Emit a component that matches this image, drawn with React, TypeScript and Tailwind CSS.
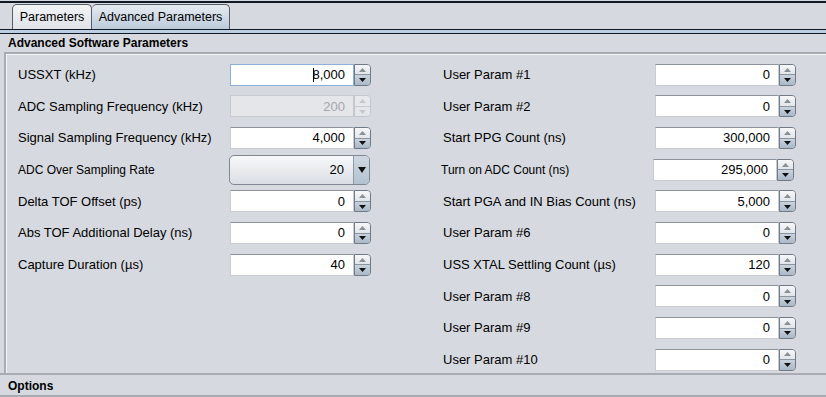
import React from 'react';

type Field = {
  label: string;
  value: string;
  small?: boolean;
  disabled?: boolean;
  focused?: boolean;
  combo?: boolean;
  nudge?: boolean;
};

const leftFields: Field[] = [
  { label: 'USSXT (kHz)', value: '8,000', focused: true },
  { label: 'ADC Sampling Frequency (kHz)', value: '200', disabled: true },
  { label: 'Signal Sampling Frequency (kHz)', value: '4,000' },
  { label: 'ADC Over Sampling Rate', value: '20', small: true, combo: true },
  { label: 'Delta TOF Offset (ps)', value: '0' },
  { label: 'Abs TOF Additional Delay (ns)', value: '0' },
  { label: 'Capture Duration (µs)', value: '40' },
];

const rightFields: Field[] = [
  { label: 'User Param #1', value: '0' },
  { label: 'User Param #2', value: '0' },
  { label: 'Start PPG Count (ns)', value: '300,000' },
  { label: 'Turn on ADC Count (ns)', value: '295,000', small: true, nudge: true },
  { label: 'Start PGA and IN Bias Count (ns)', value: '5,000' },
  { label: 'User Param #6', value: '0' },
  { label: 'USS XTAL Settling Count (µs)', value: '120' },
  { label: 'User Param #8', value: '0' },
  { label: 'User Param #9', value: '0' },
  { label: 'User Param #10', value: '0' },
];

const Spinner: React.FC<{ disabled?: boolean }> = ({ disabled }) => (
  <div
    className={`flex flex-col w-[17px] h-[22px] rounded-r-[4px] border overflow-hidden ${
      disabled ? 'border-[#c3c7cd]' : 'border-[#6f7a86]'
    }`}
  >
    <div
      className={`flex-1 flex items-center justify-center border-b ${
        disabled
          ? 'bg-[#e6e8ec] border-[#c8ccd2]'
          : 'bg-gradient-to-b from-[#f6f7f9] to-[#e1e5ea] border-[#8c96a1]'
      }`}
    >
      <svg width="7" height="4" viewBox="0 0 7 4">
        <polygon points="3.5,0 7,4 0,4" fill={disabled ? '#c4c8ce' : '#8a9098'} />
      </svg>
    </div>
    <div
      className={`flex-1 flex items-center justify-center ${
        disabled ? 'bg-[#e3e6ea]' : 'bg-gradient-to-b from-[#c9d3de] to-[#aab8c7]'
      }`}
    >
      <svg width="7" height="4" viewBox="0 0 7 4">
        <polygon points="0,0 7,0 3.5,4" fill={disabled ? '#c4c8ce' : '#111111'} />
      </svg>
    </div>
  </div>
);

const NumberInput: React.FC<{ field: Field }> = ({ field }) => {
  if (field.combo) {
    return (
      <div className="flex h-[30px] w-[141px] -ml-px rounded-[5px] border border-[#7f8893] bg-gradient-to-b from-[#f7f8fa] via-[#e9ebef] to-[#dadee4] overflow-hidden">
        <div className="flex-1 flex items-center justify-end pr-[9px] text-[13px] text-black">
          {field.value}
        </div>
        <div className="w-[16px] flex items-center justify-center border-l border-[#8e99a5] bg-gradient-to-b from-[#cfd8e2] to-[#b3c1cf]">
          <svg width="8" height="6" viewBox="0 0 8 6">
            <polygon points="0,0 8,0 4,6" fill="#111111" />
          </svg>
        </div>
      </div>
    );
  }
  return (
    <div className={`flex items-center ${field.nudge ? '-ml-[2px]' : ''}`}>
      <div
        className={`flex items-center justify-end h-[22px] w-[124px] pr-[8px] text-[13px] border ${
          field.disabled
            ? 'bg-[#e4e6ea] text-[#a3a6ab] border-[#c6cad0]'
            : field.focused
            ? 'bg-white text-black border-[#8eb0d8]'
            : 'bg-white text-black border-[#c9cdd3] border-t-[#8d939b]'
        }`}
      >
        {field.focused && <span className="inline-block w-px h-[14px] bg-black -mr-[2px]" />}
        {field.value}
      </div>
      <Spinner disabled={field.disabled} />
    </div>
  );
};

const Row: React.FC<{ field: Field }> = ({ field }) => (
  <div className="flex items-center h-[31.67px]">
    <div
      className={`w-[212px] text-black ${field.small ? 'text-[12px]' : 'text-[13px]'} ${
        field.nudge ? '-ml-[2px] mr-[2px]' : ''
      }`}
    >
      {field.label}
    </div>
    <NumberInput field={field} />
  </div>
);

export default function App() {
  return (
    <div
      className="w-[826px] h-[397px] overflow-hidden bg-[#d6d9df] flex flex-col"
      style={{ fontFamily: '"Liberation Sans", Arial, sans-serif' }}
    >
      {/* tab strip */}
      <div className="relative h-[34px] flex flex-col">
        <div className="h-[1px]" />
        <div className="h-[2px] bg-[#111a24]" />
        <div className="flex items-end h-[26px] pl-[12px]">
          <div className="h-[25px] w-[80px] flex items-center justify-center text-[12.5px] text-black rounded-t-[5px] border border-b-0 border-[#555d66] bg-gradient-to-b from-[#f2f3f5] to-[#dfe2e7]">
            Parameters
          </div>
          <div className="h-[25px] w-[138px] flex items-center justify-center text-[12.5px] text-black rounded-t-[5px] border border-b-0 border-l-0 border-[#555d66] bg-gradient-to-b from-[#e6ebf1] to-[#bccbda]">
            Advanced Parameters
          </div>
        </div>
        <div className="h-[1px] bg-[#111a24]" />
        <div className="h-[3px] bg-[#bccfe2]" />
        <div className="h-[1px] bg-[#111a24]" />
      </div>

      <div className="h-[18px] flex items-center pl-[8px] text-[12px] font-bold text-black">
        Advanced Software Parameters
      </div>

      <div className="ml-[4px] h-[321px] border-t-2 border-l-2 border-t-[#a9adb3] border-l-[#a9adb3] shadow-[inset_1px_1px_0_#f4f5f7] pt-[5px] pl-[12px] grid grid-cols-[425px_1fr]">
        <div className="flex flex-col">
          {leftFields.map((f) => (
            <Row key={f.label} field={f} />
          ))}
        </div>
        <div className="flex flex-col">
          {rightFields.map((f) => (
            <Row key={f.label} field={f} />
          ))}
        </div>
      </div>

      <div className="border-t-2 border-[#a9adb3] h-[22px] flex items-center pl-[8px] pt-[2px] text-[12px] font-bold text-black">
        Options
      </div>
      <div className="border-t-2 border-[#a9adb3]" />
    </div>
  );
}
